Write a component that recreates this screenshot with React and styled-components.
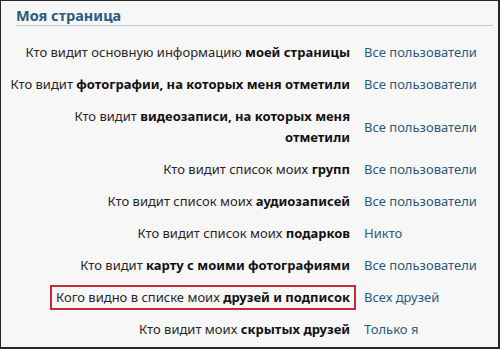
import React from 'react'
import styled, { createGlobalStyle } from 'styled-components'

const GlobalStyle = createGlobalStyle`
  html, body {
    margin: 0;
    padding: 0;
    background: #f7f7f7;
  }
  * {
    box-sizing: border-box;
  }
`

const Frame = styled.div`
  width: 500px;
  height: 349px;
  border-style: solid;
  border-color: #262626;
  border-width: 1px 2px 2px 1px;
  background: #f7f7f7;
  font-family: 'Noto Sans', 'Open Sans', sans-serif;
  overflow: hidden;
  padding: 3px 5px 0 7px;
`

const Header = styled.div`
  margin-left: 8px;
  height: 22px;
  border-bottom: 1px solid #bccad8;
  display: flex;
  align-items: center;
`

const Title = styled.h2`
  margin: 0;
  font-size: 14.5px;
  font-weight: 700;
  color: #2e5b82;
  line-height: 18px;
`

const List = styled.div`
  display: flex;
  flex-direction: column;
  padding-top: 10.5px;
`

const Row = styled.div`
  display: grid;
  grid-template-columns: 342px 1fr;
  align-items: center;
  padding: 5.5px 0;
  font-size: 13px;
  line-height: 21px;
`

const Label = styled.div`
  text-align: right;
  color: #262626;
  display: flex;
  justify-content: flex-end;

  b {
    color: #111;
    font-weight: 700;
  }
`

const LabelText = styled.span`
  padding: 0 ${({ $marked }) => ($marked ? '4px' : '0')};
  margin-right: ${({ $marked }) => ($marked ? '-6px' : '0')};
  border: ${({ $marked }) => ($marked ? '2px solid #c92a3a' : 'none')};
  margin-top: ${({ $marked }) => ($marked ? '-2px' : '0')};
  margin-bottom: ${({ $marked }) => ($marked ? '-2px' : '0')};
  line-height: 21px;
`

const Value = styled.div`
  padding-left: 14px;
  color: #2b5a7e;
`

const rows = [
  { pre: 'Кто видит основную информацию ', bold: 'моей страницы', value: 'Все пользователи' },
  { pre: 'Кто видит ', bold: 'фотографии, на которых меня отметили', value: 'Все пользователи' },
  { pre: 'Кто видит ', bold: 'видеозаписи, на которых меня отметили', value: 'Все пользователи' },
  { pre: 'Кто видит список моих ', bold: 'групп', value: 'Все пользователи' },
  { pre: 'Кто видит список моих ', bold: 'аудиозаписей', value: 'Все пользователи' },
  { pre: 'Кто видит список моих ', bold: 'подарков', value: 'Никто' },
  { pre: 'Кто видит ', bold: 'карту с моими фотографиями', value: 'Все пользователи' },
  { pre: 'Кого видно в списке моих ', bold: 'друзей и подписок', value: 'Всех друзей', marked: true },
  { pre: 'Кто видит моих ', bold: 'скрытых друзей', value: 'Только я' },
]

const App = () => {
  return (
    <>
      <GlobalStyle />
      <Frame>
        <Header>
          <Title>Моя страница</Title>
        </Header>
        <List>
          {rows.map(({ pre, bold, value, marked }, i) => (
            <Row key={i}>
              <Label>
                <LabelText $marked={marked}>
                  {pre}
                  <b>{bold}</b>
                </LabelText>
              </Label>
              <Value>{value}</Value>
            </Row>
          ))}
        </List>
      </Frame>
    </>
  )
}

export default App
